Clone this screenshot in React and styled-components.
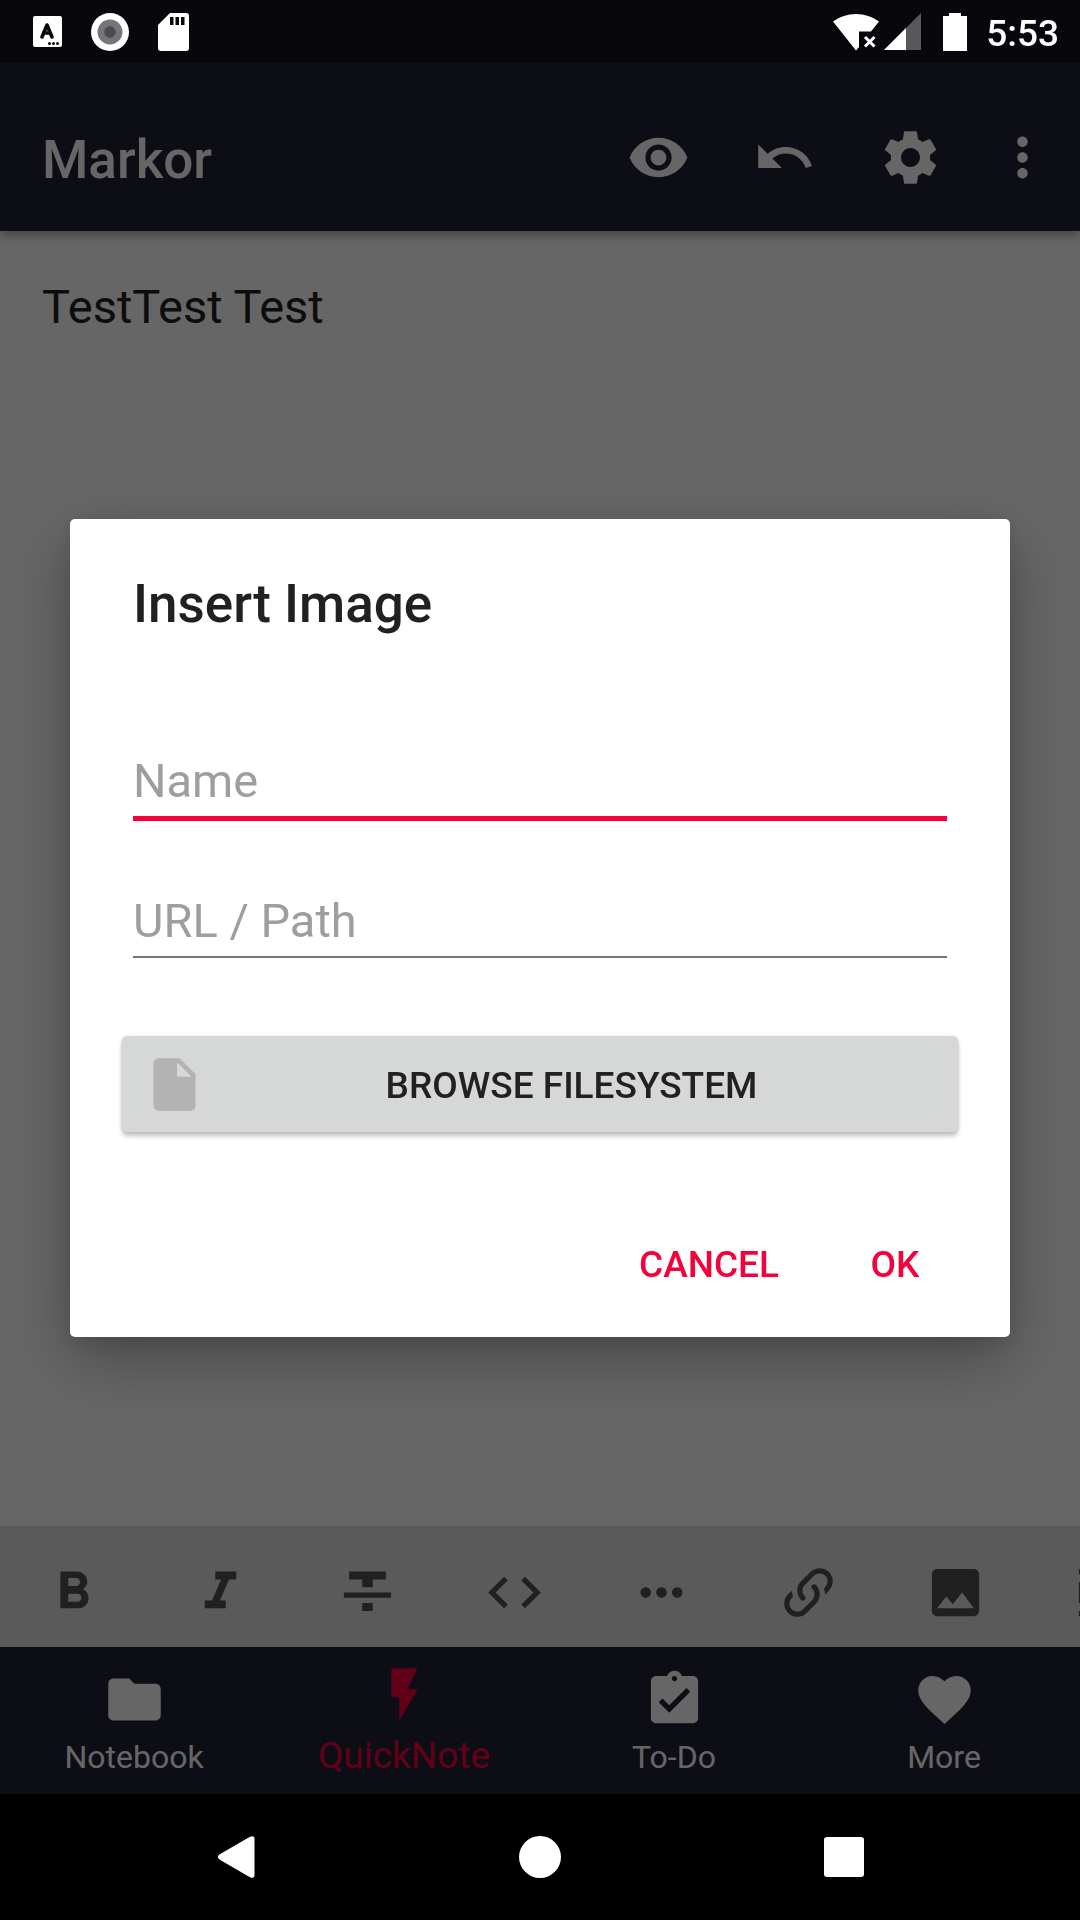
import React, { useState } from "react";
import styled, { createGlobalStyle } from "styled-components";

const color = {
  primary: "#212135",
  primaryDark: "#151520",
  accent: "#f6003b",
  text: "#212121",
  hint: "#9e9e9e",
};

const GlobalStyle = createGlobalStyle`
  *, *::before, *::after { box-sizing: border-box; }
  html, body, #root { height: 100%; }
  body {
    margin: 0;
    background: #000;
    font-family: Roboto, "Noto Sans", sans-serif;
  }
  button, input, textarea { font: inherit; color: inherit; }
  button {
    border: 0;
    padding: 0;
    background: none;
    cursor: pointer;
  }
`;

const Screen = styled.div`
  display: flex;
  flex-direction: column;
  min-height: 100%;
  overflow: hidden;
`;

const StatusBar = styled.div`
  flex: none;
  height: 63px;
  background: ${color.primaryDark};
`;

const StatusContent = styled.div`
  position: relative;
  z-index: 2;
  display: flex;
  align-items: center;
  justify-content: space-between;
  height: 100%;
  padding: 0 21px 0 33px;
  color: #fff;
`;

const StatusGroup = styled.div`
  display: flex;
  align-items: center;
  gap: ${(p) => p.$gap}px;
`;

const BatterySlot = styled.span`
  display: flex;
  margin: 0 10px 0 17px;
`;

const Clock = styled.time`
  margin-left: 4px;
  padding-top: 4px;
  font-size: 37px;
  font-weight: 500;
  line-height: 44px;
`;

const AppBar = styled.header`
  position: relative;
  z-index: 1;
  flex: none;
  display: flex;
  align-items: center;
  height: 168px;
  padding: 20px 8px 0 42px;
  background: ${color.primary};
  color: #fff;
  box-shadow: 0 4px 10px rgba(0, 0, 0, 0.35);
`;

const AppTitle = styled.h1`
  flex: 1;
  margin: 0;
  padding-top: 6px;
  font-size: 53px;
  font-weight: 500;
  line-height: 60px;
`;

const IconButton = styled.button`
  flex: none;
  display: flex;
  align-items: center;
  justify-content: center;
  width: ${(p) => p.$width || 126}px;
  height: 126px;
`;

const Editor = styled.textarea`
  flex: 1;
  display: block;
  width: 100%;
  padding: 48px 42px;
  border: 0;
  outline: 0;
  resize: none;
  background: #fff;
  color: ${color.text};
  font-size: 47px;
  line-height: 56px;
`;

const FormatBar = styled.div`
  flex: none;
  display: flex;
  height: 121px;
  padding-top: 11px;
  overflow: hidden;
  background: #e0e0e0;
  color: #525252;
`;

const FormatButton = styled(IconButton)`
  width: 147px;
  height: 110px;
`;

const Tabs = styled.nav`
  flex: none;
  display: grid;
  grid-template-columns: repeat(4, 1fr);
  height: 147px;
  background: ${color.primary};
`;

const Tab = styled.a`
  display: flex;
  flex-direction: column;
  align-items: center;
  justify-content: flex-end;
  gap: ${(p) => (p.$active ? 8 : 6)}px;
  padding: 0 2px ${(p) => (p.$active ? 16 : 17)}px 0;
  color: ${(p) => (p.$active ? color.accent : "#fff")};
  font-size: ${(p) => (p.$active ? 37 : 32)}px;
  line-height: ${(p) => (p.$active ? 44 : 40)}px;
  text-decoration: none;
`;

const SystemBar = styled.div`
  position: relative;
  z-index: 2;
  flex: none;
  display: flex;
  justify-content: center;
  height: 126px;
  padding: 0 84px;
  background: #000;
  color: #fff;
`;

const SystemButton = styled(IconButton)`
  flex: 1;
  max-width: 304px;
`;

const Scrim = styled.div`
  position: fixed;
  inset: 0;
  z-index: 1;
  display: flex;
  align-items: center;
  justify-content: center;
  padding: 62px 70px 126px;
  background: rgba(0, 0, 0, 0.6);
`;

const Dialog = styled.form`
  display: flex;
  flex-direction: column;
  width: 100%;
  max-width: 1400px;
  padding: 50px 52px 9px;
  border-radius: 5px;
  background: #fff;
  color: ${color.text};
  box-shadow: 0 24px 64px rgba(0, 0, 0, 0.28), 0 6px 24px rgba(0, 0, 0, 0.12);
`;

const DialogTitle = styled.h2`
  margin: 0 11px 66px;
  font-size: 53px;
  font-weight: 500;
  line-height: 70px;
`;

const Field = styled.input`
  height: 116px;
  margin: 0 11px 21px;
  padding: 48px 0 ${(p) => (p.$strong ? 9 : 6)}px;
  border: 0;
  border-bottom: ${(p) => (p.$strong ? `5px solid ${color.accent}` : "2px solid #757575")};
  border-radius: 0;
  outline: 0;
  background: none;
  font-size: 47px;
  line-height: 56px;

  &::placeholder {
    color: ${color.hint};
    opacity: 1;
  }
`;

const BrowseButton = styled.button`
  display: flex;
  align-items: center;
  height: 96px;
  margin-top: 57px;
  padding: 0 21px;
  border-radius: 5px;
  background: #d6d7d7;
  box-shadow: 0 4px 5px rgba(0, 0, 0, 0.24), 0 0 3px rgba(0, 0, 0, 0.12);
  font-size: 37px;
  font-weight: 500;
  line-height: 44px;

  svg { color: #b3b3b3; }
  span {
    flex: 1;
    padding-top: 4px;
  }
`;

const Actions = styled.div`
  display: flex;
  justify-content: flex-end;
  gap: 11px;
  margin: 70px -21px 0 0;
`;

const TextButton = styled.button`
  min-width: 168px;
  height: 126px;
  padding: 0 21px;
  color: ${color.accent};
  font-size: 37px;
  font-weight: 500;
  line-height: 44px;
`;

const glyphs = {
  eye: "M12 4.5C7 4.5 2.73 7.61 1 12c1.73 4.39 6 7.5 11 7.5s9.27-3.11 11-7.5c-1.73-4.39-6-7.5-11-7.5zM12 17c-2.76 0-5-2.24-5-5s2.24-5 5-5 5 2.24 5 5-2.24 5-5 5zm0-8c-1.66 0-3 1.34-3 3s1.34 3 3 3 3-1.34 3-3-1.34-3-3-3z",
  undo: "M12.5 8c-2.65 0-5.05.99-6.9 2.6L2 7v9h9l-3.62-3.62c1.39-1.16 3.16-1.88 5.12-1.88 3.54 0 6.55 2.31 7.6 5.5l2.37-.78C21.08 11.03 17.15 8 12.5 8z",
  settings: "M19.43 12.98c.04-.32.07-.64.07-.98s-.03-.66-.07-.98l2.11-1.65c.19-.15.24-.42.12-.64l-2-3.46c-.12-.22-.39-.3-.61-.22l-2.49 1c-.52-.4-1.08-.73-1.69-.98l-.38-2.65C14.46 2.18 14.25 2 14 2h-4c-.25 0-.46.18-.49.42l-.38 2.65c-.61.25-1.17.59-1.69.98l-2.49-1c-.23-.09-.49 0-.61.22l-2 3.46c-.13.22-.07.49.12.64l2.11 1.65c-.04.32-.07.65-.07.98s.03.66.07.98l-2.11 1.65c-.19.15-.24.42-.12.64l2 3.46c.12.22.39.3.61.22l2.49-1c.52.4 1.08.73 1.69.98l.38 2.65c.03.24.24.42.49.42h4c.25 0 .46-.18.49-.42l.38-2.65c.61-.25 1.17-.59 1.69-.98l2.49 1c.23.09.49 0 .61-.22l2-3.46c.12-.22.07-.49-.12-.64l-2.11-1.65zM12 15.6c-1.98 0-3.6-1.62-3.6-3.6s1.62-3.6 3.6-3.6 3.6 1.62 3.6 3.6-1.62 3.6-3.6 3.6z",
  overflow: "M12 8c1.1 0 2-.9 2-2s-.9-2-2-2-2 .9-2 2 .9 2 2 2zm0 2c-1.1 0-2 .9-2 2s.9 2 2 2 2-.9 2-2-.9-2-2-2zm0 6c-1.1 0-2 .9-2 2s.9 2 2 2 2-.9 2-2-.9-2-2-2z",
  bold: "M15.6 10.79c.97-.67 1.65-1.77 1.65-2.79 0-2.26-1.75-4-4-4H7v14h7.04c2.09 0 3.71-1.7 3.71-3.79 0-1.52-.86-2.82-2.15-3.42zM10 6.5h3c.83 0 1.5.67 1.5 1.5s-.67 1.5-1.5 1.5h-3v-3zm3.5 9H10v-3h3.5c.83 0 1.5.67 1.5 1.5s-.67 1.5-1.5 1.5z",
  italic: "M10 4v3h2.21l-3.42 8H6v3h8v-3h-2.21l3.42-8H18V4z",
  strike: "M10 19h4v-3h-4v3zM5 4v3h5v3h4V7h5V4H5zM3 14h18v-2H3v2z",
  code: "M9.4 16.6L4.8 12l4.6-4.6L8 6l-6 6 6 6 1.4-1.4zm5.2 0l4.6-4.6-4.6-4.6L16 6l6 6-6 6-1.4-1.4z",
  dots: "M6 10c-1.1 0-2 .9-2 2s.9 2 2 2 2-.9 2-2-.9-2-2-2zm12 0c-1.1 0-2 .9-2 2s.9 2 2 2 2-.9 2-2-.9-2-2-2zm-6 0c-1.1 0-2 .9-2 2s.9 2 2 2 2-.9 2-2-.9-2-2-2z",
  link: "M10.59,13.41C11,13.8 11,14.44 10.59,14.83C10.2,15.22 9.56,15.22 9.17,14.83C7.22,12.88 7.22,9.71 9.17,7.76L12.71,4.22C14.66,2.27 17.83,2.27 19.78,4.22C21.73,6.17 21.73,9.34 19.78,11.29L18.29,12.78C18.3,11.96 18.17,11.14 17.89,10.36L18.36,9.88C19.54,8.71 19.54,6.81 18.36,5.64C17.19,4.46 15.29,4.46 14.12,5.64L10.59,9.17C9.41,10.34 9.41,12.24 10.59,13.41M13.41,9.17C13.8,8.78 14.44,8.78 14.83,9.17C16.78,11.12 16.78,14.29 14.83,16.24L11.29,19.78C9.34,21.73 6.17,21.73 4.22,19.78C2.27,17.83 2.27,14.66 4.22,12.71L5.71,11.22C5.7,12.04 5.83,12.86 6.11,13.65L5.64,14.12C4.46,15.29 4.46,17.19 5.64,18.36C6.81,19.54 8.71,19.54 9.88,18.36L13.41,14.83C14.59,13.66 14.59,11.76 13.41,10.59C13,10.2 13,9.56 13.41,9.17Z",
  image: "M21 19V5c0-1.1-.9-2-2-2H5c-1.1 0-2 .9-2 2v14c0 1.1.9 2 2 2h14c1.1 0 2-.9 2-2zM8.5 13.5l2.5 3.01L14.5 12l4.5 6H5l3.5-4.5z",
  list: "M3 5h18V3H3v2zM3 16h18V8H3v8zM3 21h18v-2H3v2z",
  folder: "M10 4H4c-1.1 0-1.99.9-1.99 2L2 18c0 1.1.9 2 2 2h16c1.1 0 2-.9 2-2V8c0-1.1-.9-2-2-2h-8l-2-2z",
  flash: "M7 2v11h3v9l7-12h-4l4-8z",
  todo: "M19 3h-4.18C14.4 1.84 13.3 1 12 1c-1.3 0-2.4.84-2.82 2H5c-1.1 0-2 .9-2 2v14c0 1.1.9 2 2 2h14c1.1 0 2-.9 2-2V5c0-1.1-.9-2-2-2zm-7 0c.55 0 1 .45 1 1s-.45 1-1 1-1-.45-1-1 .45-1 1-1zm-2 14l-4-4 1.41-1.41L10 14.17l6.59-6.59L18 9l-8 8z",
  heart: "M12 21.35l-1.45-1.32C5.4 15.36 2 12.28 2 8.5 2 5.42 4.42 3 7.5 3c1.74 0 3.41.81 4.5 2.09C13.09 3.81 14.76 3 16.5 3 19.58 3 22 5.42 22 8.5c0 3.78-3.4 6.86-8.55 11.54L12 21.35z",
  file: "M6 2c-1.1 0-1.99.9-1.99 2L4 20c0 1.1.89 2 1.99 2H18c1.1 0 2-.9 2-2V8l-6-6H6zm7 7V3.5L18.5 9H13z",
};

const Icon = ({ name }) => (
  <svg width="63" height="63" viewBox="0 0 24 24" fill="currentColor" aria-hidden="true">
    <path d={glyphs[name]} />
  </svg>
);

const KeyboardIcon = () => (
  <svg width="29" height="31" viewBox="0 0 29 31" aria-hidden="true">
    <rect width="29" height="31" rx="2" fill="#fff" />
    <path d="M9 21L14 9L19 21M11 17H17" fill="none" stroke="#08090d" strokeWidth="3.6" strokeLinecap="round" strokeLinejoin="round" />
    <g fill="#08090d">
      <circle cx="16.5" cy="27.5" r="1.5" />
      <circle cx="20.5" cy="27.5" r="1.5" />
      <circle cx="24.5" cy="27.5" r="1.5" />
    </g>
  </svg>
);

const RecordIcon = () => (
  <svg width="38" height="38" viewBox="0 0 38 38" aria-hidden="true">
    <circle cx="19" cy="19" r="19" fill="#fff" />
    <circle cx="19" cy="19" r="12.5" fill="#747579" />
    <circle cx="19" cy="19" r="5.8" fill="#4a4b4f" />
  </svg>
);

const CardIcon = () => (
  <svg width="31" height="38" viewBox="0 0 31 38" aria-hidden="true">
    <path d="M12 0H28a3 3 0 0 1 3 3V35a3 3 0 0 1-3 3H3a3 3 0 0 1-3-3V12z" fill="#fff" />
    <path d="M12 4h3.5v8h-3.5zM17.5 4h3.5v8h-3.5zM23 4h3.5v8h-3.5z" fill="#08090d" />
  </svg>
);

const WifiIcon = () => (
  <svg width="46" height="38" viewBox="0 0 46 38" aria-hidden="true">
    <path d="M0 8.5Q10 1 23 1T46 8.5L38 18.5H26V34L23 37.5z" fill="#fff" />
    <path d="M32 24L41.5 33.5M41.5 24L32 33.5" stroke="#fff" strokeWidth="3" />
  </svg>
);

const SignalIcon = () => (
  <svg width="37" height="38" viewBox="0 0 37 38" aria-hidden="true">
    <path d="M0 37L37 0V37z" fill="#57585b" />
    <path d="M0 37L22 15V37z" fill="#fff" />
  </svg>
);

const BatteryIcon = () => (
  <svg width="24" height="38" viewBox="0 0 24 38" aria-hidden="true">
    <path d="M6 0H18V3H24V38H0V3H6z" fill="#fff" />
  </svg>
);

const BackIcon = () => (
  <svg width="42" height="42" viewBox="0 0 42 42" aria-hidden="true">
    <path d="M4.8 18.3L35 .8Q39.5-1 39.5 3V39Q39.5 43 35 41.2L4.8 23.7Q.8 21 4.8 18.3z" fill="#fff" />
  </svg>
);

const HomeIcon = () => (
  <svg width="42" height="42" viewBox="0 0 42 42" aria-hidden="true">
    <circle cx="21" cy="21" r="21" fill="#fff" />
  </svg>
);

const RecentsIcon = () => (
  <svg width="40" height="40" viewBox="0 0 40 40" aria-hidden="true">
    <rect width="40" height="40" rx="3" fill="#fff" />
  </svg>
);

const formatActions = [
  ["bold", "Bold"],
  ["italic", "Italic"],
  ["strike", "Strikethrough"],
  ["code", "Code"],
  ["dots", "More formatting"],
  ["link", "Insert link"],
  ["image", "Insert image"],
  ["list", "List"],
];

const tabs = [
  { icon: "folder", label: "Notebook" },
  { icon: "flash", label: "QuickNote", active: true },
  { icon: "todo", label: "To-Do" },
  { icon: "heart", label: "More" },
];

export default function App() {
  const [note, setNote] = useState("TestTest Test");
  const [name, setName] = useState("");
  const [path, setPath] = useState("");

  return (
    <>
      <GlobalStyle />
      <Screen>
        <StatusBar>
          <StatusContent>
            <StatusGroup $gap={29}>
              <KeyboardIcon />
              <RecordIcon />
              <CardIcon />
            </StatusGroup>
            <StatusGroup $gap={5}>
              <WifiIcon />
              <SignalIcon />
              <BatterySlot>
                <BatteryIcon />
              </BatterySlot>
              <Clock>5:53</Clock>
            </StatusGroup>
          </StatusContent>
        </StatusBar>

        <AppBar>
          <AppTitle>Markor</AppTitle>
          <IconButton type="button" aria-label="Preview"><Icon name="eye" /></IconButton>
          <IconButton type="button" aria-label="Undo"><Icon name="undo" /></IconButton>
          <IconButton type="button" aria-label="Settings"><Icon name="settings" /></IconButton>
          <IconButton type="button" aria-label="More options" $width={99}><Icon name="overflow" /></IconButton>
        </AppBar>

        <Editor
          aria-label="Note"
          spellCheck={false}
          value={note}
          onChange={(e) => setNote(e.target.value)}
        />

        <FormatBar role="toolbar" aria-label="Formatting">
          {formatActions.map(([icon, label]) => (
            <FormatButton key={icon} type="button" aria-label={label}>
              <Icon name={icon} />
            </FormatButton>
          ))}
        </FormatBar>

        <Tabs>
          {tabs.map((tab) => (
            <Tab key={tab.label} href="#" $active={tab.active} aria-current={tab.active ? "page" : undefined}>
              <Icon name={tab.icon} />
              {tab.label}
            </Tab>
          ))}
        </Tabs>

        <SystemBar>
          <SystemButton type="button" aria-label="Back"><BackIcon /></SystemButton>
          <SystemButton type="button" aria-label="Home"><HomeIcon /></SystemButton>
          <SystemButton type="button" aria-label="Recent apps"><RecentsIcon /></SystemButton>
        </SystemBar>
      </Screen>

      <Scrim>
        <Dialog role="dialog" aria-modal="true" aria-labelledby="dialog-title" onSubmit={(e) => e.preventDefault()}>
          <DialogTitle id="dialog-title">Insert Image</DialogTitle>
          <Field $strong aria-label="Name" placeholder="Name" value={name} onChange={(e) => setName(e.target.value)} />
          <Field aria-label="URL / Path" placeholder="URL / Path" value={path} onChange={(e) => setPath(e.target.value)} />
          <BrowseButton type="button">
            <Icon name="file" />
            <span>BROWSE FILESYSTEM</span>
          </BrowseButton>
          <Actions>
            <TextButton type="button">CANCEL</TextButton>
            <TextButton type="submit">OK</TextButton>
          </Actions>
        </Dialog>
      </Scrim>
    </>
  );
}
